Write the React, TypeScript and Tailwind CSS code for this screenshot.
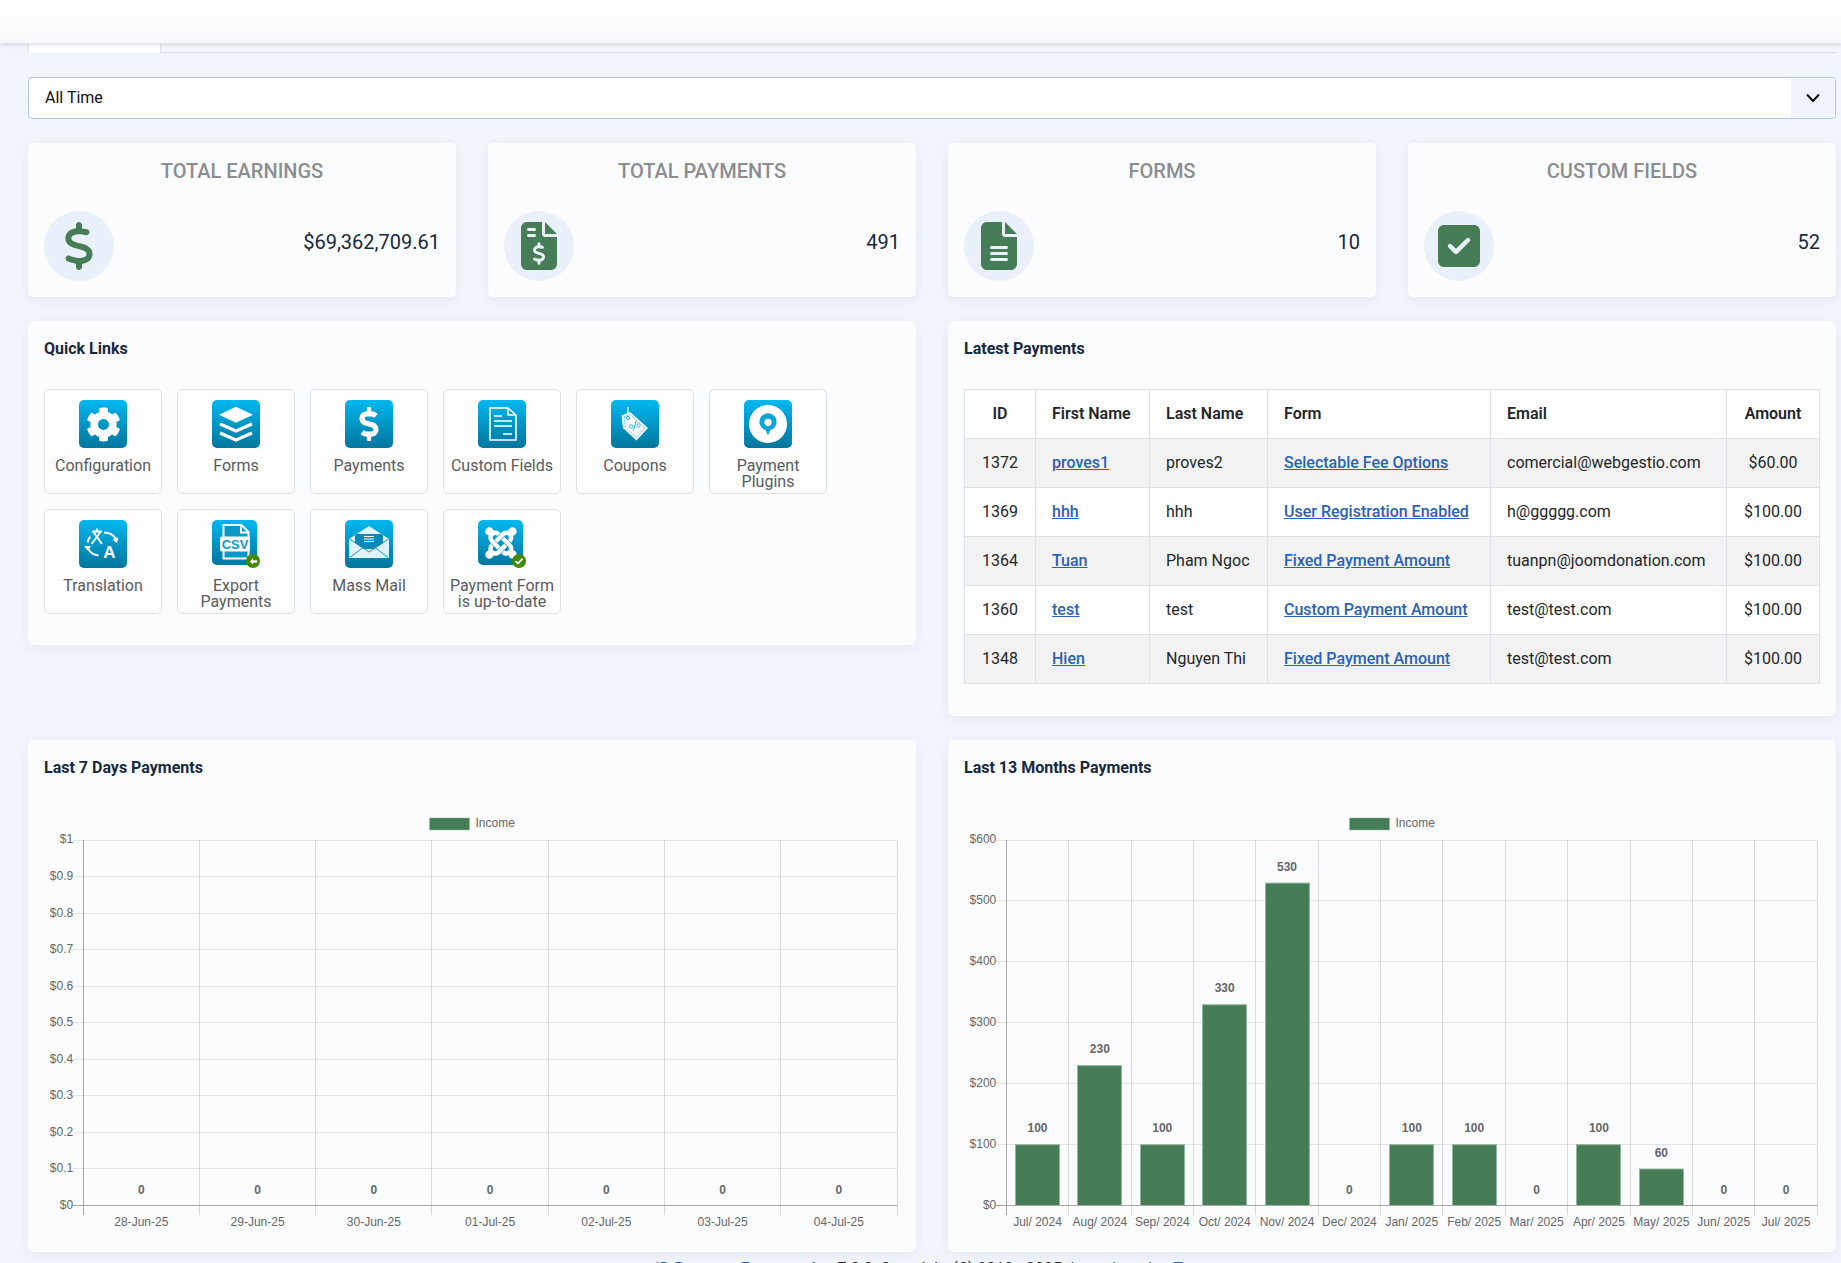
import { FaCog, FaDollarSign, FaJoomla } from 'react-icons/fa';
import { FaDollarSign as FaDollar6, FaFileInvoiceDollar, FaFileLines, FaSquareCheck } from 'react-icons/fa6';

interface ChartProps {
  viewBox: string;
  width: number;
  height: number;
  axisX: number;
  rightX: number;
  legendX: number;
  labels: string[];
  values: number[];
  maxValue: number;
  yTicks: string[];
  showBars?: boolean;
}

const stats = [
  { title: 'TOTAL EARNINGS', value: '$69,362,709.61', icon: <FaDollar6 size={48} /> },
  { title: 'TOTAL PAYMENTS', value: '491', icon: <FaFileInvoiceDollar size={48} /> },
  { title: 'FORMS', value: '10', icon: <FaFileLines size={48} /> },
  { title: 'CUSTOM FIELDS', value: '52', icon: <FaSquareCheck size={48} /> },
];

const payments = [
  { id: 1372, first: 'proves1', last: 'proves2', form: 'Selectable Fee Options', email: 'comercial@webgestio.com', amount: '$60.00' },
  { id: 1369, first: 'hhh', last: 'hhh', form: 'User Registration Enabled', email: 'h@ggggg.com', amount: '$100.00' },
  { id: 1364, first: 'Tuan', last: 'Pham Ngoc', form: 'Fixed Payment Amount', email: 'tuanpn@joomdonation.com', amount: '$100.00' },
  { id: 1360, first: 'test', last: 'test', form: 'Custom Payment Amount', email: 'test@test.com', amount: '$100.00' },
  { id: 1348, first: 'Hien', last: 'Nguyen Thi', form: 'Fixed Payment Amount', email: 'test@test.com', amount: '$100.00' },
];

const days = ['28-Jun-25', '29-Jun-25', '30-Jun-25', '01-Jul-25', '02-Jul-25', '03-Jul-25', '04-Jul-25'];
const months = ['Jul/ 2024', 'Aug/ 2024', 'Sep/ 2024', 'Oct/ 2024', 'Nov/ 2024', 'Dec/ 2024', 'Jan/ 2025', 'Feb/ 2025', 'Mar/ 2025', 'Apr/ 2025', 'May/ 2025', 'Jun/ 2025', 'Jul/ 2025'];

function Tile({ small, children }: { small?: boolean; children: React.ReactNode }) {
  return (
    <div className={`flex items-center justify-center rounded-[5px] bg-linear-to-b from-[#00b8f0] to-[#00769e] text-white ${small ? 'h-[45px] w-[45px]' : 'h-[48px] w-[48px]'}`}>
      {children}
    </div>
  );
}

function Badge({ children }: { children: React.ReactNode }) {
  return (
    <span className="absolute left-[34px] top-[34px] flex h-[14px] w-[14px] items-center justify-center rounded-full bg-[#3f8a05]">
      {children}
    </span>
  );
}

function LayersIcon() {
  return (
    <svg width="48" height="48" viewBox="0 0 48 48" fill="none" stroke="white" strokeWidth="3.2">
      <polygon points="24,6.7 41,14.7 24,22.7 7,14.7" fill="white" stroke="none" />
      <polyline points="8,24 24,31 40,24" />
      <polyline points="8,33 24,40 40,33" />
    </svg>
  );
}

function DocIcon() {
  return (
    <svg width="48" height="48" viewBox="0 0 48 48" fill="none" stroke="white" strokeWidth="1.6">
      <path d="M12 8h18l8 7v25H12z" />
      <path d="M30 8v7h8" />
      <path d="M16 16h8M16 21h18M16 26h18M25 34h9" />
    </svg>
  );
}

function CouponIcon() {
  return (
    <svg width="48" height="48" viewBox="0 0 48 48" fill="none">
      <path d="M17 7l-.6 9" stroke="white" strokeWidth="1.5" />
      <path d="M10.5 15.5L19 12l18 16-11.5 12.5L12 28z" fill="white" />
      <path d="M13 17l6-2.5 15 13.5-8.5 9.5L14.5 27z" stroke="#25b4e4" strokeWidth="0.8" strokeDasharray="2 1" />
      <circle cx="17" cy="18" r="1.6" stroke="#25b4e4" />
      <circle cx="20" cy="26.5" r="1.7" stroke="#25b4e4" />
      <circle cx="27.5" cy="25.5" r="1.7" stroke="#25b4e4" />
      <path d="M25 21l-2.5 10" stroke="#25b4e4" />
    </svg>
  );
}

function PluginIcon() {
  return (
    <svg width="48" height="48" viewBox="0 0 48 48">
      <circle cx="24" cy="24" r="19" fill="white" />
      <path d="M24 35.5l-2.4-5.4a8.6 8.6 0 1 1 4.8 0z" fill="#11a5d6" />
      <circle cx="24" cy="22.3" r="3.6" fill="white" />
    </svg>
  );
}

function TranslateIcon() {
  return (
    <svg width="48" height="48" viewBox="0 0 48 48" fill="none" stroke="white">
      <path d="M13 11.500h10M18 8.500v3M14.500 12l8.500 12M21.500 12l-9 12" strokeWidth="2" />
      <path d="M25 12.500a14 14 0 0 1 12.500 7.500" strokeWidth="2" />
      <path d="M33.500 19.500l4.500 3.500 1.500-5.500z" fill="white" stroke="none" />
      <path d="M11.500 16.500a13 13 0 0 0-3 6" strokeWidth="2" />
      <path d="M8.500 27a13 13 0 0 0 11 8.500" strokeWidth="2" />
      <path d="M5 26l3.500 4.500 3.500-4.500z" fill="white" stroke="none" />
      <text x="30.500" y="37.500" textAnchor="middle" fill="white" stroke="none" className="font-['Liberation_Sans'] text-[17px] font-bold">A</text>
    </svg>
  );
}

function CsvIcon() {
  return (
    <svg width="45" height="45" viewBox="0 0 45 45" fill="none">
      <path d="M11.500 5h18l7 7v26.500h-25z" stroke="white" strokeWidth="2" fill="#0c97c9" />
      <path d="M29 5v7.500h7.500" stroke="white" strokeWidth="2" />
      <rect x="8" y="16.500" width="30" height="15" rx="2" fill="white" />
      <text x="23" y="28.500" textAnchor="middle" fill="#0a9acb" className="font-['Liberation_Sans'] text-[13px] font-bold">CSV</text>
    </svg>
  );
}

function MailIcon() {
  return (
    <svg width="48" height="48" viewBox="0 0 48 48">
      <polygon points="24,6 44,19 44,38 4,38 4,19" fill="#dff3fa" />
      <rect x="10" y="14" width="28" height="15" rx="2" fill="#0b89b6" />
      <path d="M19 16.500h10M19 19h10M19 21.500h10" stroke="white" strokeWidth="1" />
      <polygon points="4,19 24,32 44,19 44,38 4,38" fill="#dff3fa" />
      <path d="M4.500 19L24 32l19.500-13M5 37.500l13-10M43 37.500l-13-10" fill="none" stroke="#0b89b6" strokeWidth="0.9" />
    </svg>
  );
}

const quickLinks: { label: string; icon: React.ReactNode }[] = [
  { label: 'Configuration', icon: <Tile><FaCog size={35} /></Tile> },
  { label: 'Forms', icon: <Tile><LayersIcon /></Tile> },
  { label: 'Payments', icon: <Tile><FaDollarSign size={34} /></Tile> },
  { label: 'Custom Fields', icon: <Tile><DocIcon /></Tile> },
  { label: 'Coupons', icon: <Tile><CouponIcon /></Tile> },
  { label: 'Payment Plugins', icon: <Tile><PluginIcon /></Tile> },
  { label: 'Translation', icon: <Tile><TranslateIcon /></Tile> },
  {
    label: 'Export Payments',
    icon: (
      <>
        <Tile small><CsvIcon /></Tile>
        <Badge>
          <svg width="9" height="9" viewBox="0 0 10 10"><path d="M1 5l3.500-3.500V3.500H9v3H4.500v2z" fill="white" /></svg>
        </Badge>
      </>
    ),
  },
  { label: 'Mass Mail', icon: <Tile><MailIcon /></Tile> },
  {
    label: 'Payment Form is up-to-date',
    icon: (
      <>
        <Tile small><FaJoomla size={36} /></Tile>
        <Badge>
          <svg width="10" height="10" viewBox="0 0 10 10"><path d="M1.500 5.200l2.400 2.300 4.600-4.800" fill="none" stroke="white" strokeWidth="1.800" /></svg>
        </Badge>
      </>
    ),
  },
];

function Card({ title, className = '', children }: { title: string; className?: string; children: React.ReactNode }) {
  return (
    <div className={`rounded-[5px] bg-[#fbfcfe] px-4 pt-4 shadow-[0_3px_10px_rgba(70,100,160,0.07)] ${className}`}>
      <h3 className="mb-[28px] h-[24px] text-[16px] font-bold leading-[24px] text-[#17293f]">{title}</h3>
      {children}
    </div>
  );
}

function Chart({ viewBox, width, height, axisX, rightX, legendX, labels, values, maxValue, yTicks, showBars }: ChartProps) {
  const top = 840;
  const bottom = 1205;
  const colW = (rightX - axisX) / labels.length;
  const sans = "font-['Liberation_Sans'] text-[12px]";

  return (
    <svg width={width} height={height} viewBox={viewBox} className="block">
      <rect x={legendX} y={818} width={40} height={12} fill="#477d56" stroke="#8fb59b" strokeWidth={0.5} />
      <text x={legendX + 46} y={827} fill="#666" className={sans}>Income</text>

      {yTicks.map((tick, i) => {
        const y = Math.floor(top + ((bottom - top) / (yTicks.length - 1)) * i) + 0.5;
        return (
          <g key={tick}>
            <line x1={axisX - 10} x2={rightX} y1={y} y2={y} stroke={i === yTicks.length - 1 ? '#a8a8a8' : '#e3e4e6'} />
            <text x={axisX - 10} y={y + (i === 0 ? 2 : 3)} textAnchor="end" fill="#666" className={sans}>{tick}</text>
          </g>
        );
      })}

      {labels.map((_, i) => {
        const x = Math.floor(axisX + colW * i) + 0.5;
        return <line key={i} x1={x} x2={x} y1={top} y2={1215} stroke={i === 0 ? '#a8a8a8' : '#d9d9dc'} />;
      })}
      <line x1={Math.floor(rightX) + 0.5} x2={Math.floor(rightX) + 0.5} y1={top} y2={1215} stroke="#d9d9dc" />

      {showBars && values.map((v, i) => {
        const h = (v / maxValue) * (bottom - top);
        const x = Math.round(axisX + colW * i + (colW - 45) / 2);
        return v > 0 ? (
          <rect key={i} x={x + 0.5} y={bottom - h + 0.5} width={44} height={h} fill="#477d56" stroke="#93b8a0" />
        ) : null;
      })}
      <line x1={axisX} x2={rightX} y1={1205.5} y2={1205.5} stroke="#a8a8a8" />

      {values.map((v, i) => {
        const h = (v / maxValue) * (bottom - top);
        const cx = axisX + colW * (i + 0.5);
        return (
          <g key={i}>
            <text x={cx} y={bottom - h - (v === 0 ? 11 : 12)} textAnchor="middle" fill="#666" className={`${sans} font-bold`}>{v}</text>
            <text x={cx} y={1226} textAnchor="middle" fill="#666" className={sans}>{labels[i]}</text>
          </g>
        );
      })}
    </svg>
  );
}

export default function App() {
  return (
    <div className="h-[1263px] overflow-hidden bg-[#f0f4fb] font-['Roboto',sans-serif] text-[16px] text-[#22262a]">
      <header className="relative z-10 h-[43px] bg-linear-to-b from-white to-[#f6f8fb] shadow-[0_1px_5px_rgba(60,80,110,0.22)]" />

      <main className="pl-[28px] pr-[5px]">
        <div className="h-[10px] border-b border-[#d9dfe7] bg-[#f2f5f9]">
          <div className="h-[10px] w-[133px] border-x border-[#e3e7ec] bg-white" />
        </div>

        <div className="mt-[24px] flex h-[42px] items-stretch overflow-hidden rounded-[4px] border border-[#b3c5e0] bg-white">
          <div className="flex flex-1 items-center pl-[16px] text-[#111]">All Time</div>
          <div className="flex w-[44px] items-center justify-center bg-[#eff3fb]">
            <svg width="16" height="10" viewBox="0 0 16 10" fill="none" stroke="#111" strokeWidth="2">
              <path d="M2 1.500l6 6.500 6-6.500" />
            </svg>
          </div>
        </div>

        <div className="mt-[24px] grid grid-cols-4 gap-x-[32px]">
          {stats.map((s) => (
            <div key={s.title} className="h-[154px] rounded-[5px] bg-[#fbfcfe] px-4 pt-[17px] shadow-[0_3px_10px_rgba(70,100,160,0.07)]">
              <div className="text-center text-[20px] font-medium leading-[22px] text-[#8b8d90]">{s.title}</div>
              <div className="mt-[29px] flex items-start justify-between">
                <div className="flex h-[70px] w-[70px] items-center justify-center rounded-full bg-[#e9f0f9] text-[#477d56]">
                  {s.icon}
                </div>
                <div className="mt-[16px] text-[20px] leading-[30px] text-[#17293f]">{s.value}</div>
              </div>
            </div>
          ))}
        </div>

        <div className="mt-[24px] grid grid-cols-2 items-start gap-x-[32px]">
          <Card title="Quick Links" className="pb-[31px]">
            <div className="flex flex-wrap gap-x-[15px] gap-y-[15px]">
              {quickLinks.map((q) => (
                <div key={q.label} className="flex h-[105px] w-[118px] flex-col items-center rounded-[5px] border border-[#dfe1e5] bg-[#fdfdfe] pt-[10px]">
                  <div className="relative h-[48px] w-[48px]">{q.icon}</div>
                  <div className="mt-[10px] px-1 text-center text-[16px] leading-[16px] text-[#5a5c60]">{q.label}</div>
                </div>
              ))}
            </div>
          </Card>

          <Card title="Latest Payments" className="pb-[32px]">
            <table className="w-[855px] table-fixed border-collapse bg-white text-[16px]">
              <colgroup>
                <col className="w-[71px]" />
                <col className="w-[114px]" />
                <col className="w-[118px]" />
                <col className="w-[223px]" />
                <col className="w-[236px]" />
                <col className="w-[93px]" />
              </colgroup>
              <thead>
                <tr className="h-[49px] font-semibold">
                  <th className="border border-[#dee2e6] text-center font-semibold">ID</th>
                  <th className="border border-[#dee2e6] pl-4 text-left font-semibold">First Name</th>
                  <th className="border border-[#dee2e6] pl-4 text-left font-semibold">Last Name</th>
                  <th className="border border-[#dee2e6] pl-4 text-left font-semibold">Form</th>
                  <th className="border border-[#dee2e6] pl-4 text-left font-semibold">Email</th>
                  <th className="border border-[#dee2e6] text-center font-semibold">Amount</th>
                </tr>
              </thead>
              <tbody>
                {payments.map((p, i) => (
                  <tr key={p.id} className={`h-[49px] ${i % 2 === 0 ? 'bg-[#f2f2f2]' : 'bg-white'}`}>
                    <td className="border border-[#dee2e6] text-center">{p.id}</td>
                    <td className="border border-[#dee2e6] pl-4">
                      <a href="#" className="font-medium text-[#2a62b4] underline">{p.first}</a>
                    </td>
                    <td className="border border-[#dee2e6] pl-4">{p.last}</td>
                    <td className="border border-[#dee2e6] pl-4">
                      <a href="#" className="font-medium text-[#2a62b4] underline">{p.form}</a>
                    </td>
                    <td className="border border-[#dee2e6] pl-4">{p.email}</td>
                    <td className="border border-[#dee2e6] text-center">{p.amount}</td>
                  </tr>
                ))}
              </tbody>
            </table>
          </Card>
        </div>

        <div className="mt-[24px] grid grid-cols-2 gap-x-[32px]">
          <Card title="Last 7 Days Payments" className="h-[512px]">
            <Chart
              viewBox="44 808 855 428"
              width={855}
              height={428}
              axisX={83.2}
              rightX={897}
              legendX={429.5}
              labels={days}
              values={[0, 0, 0, 0, 0, 0, 0]}
              maxValue={1}
              yTicks={['$1', '$0.9', '$0.8', '$0.7', '$0.6', '$0.5', '$0.4', '$0.3', '$0.2', '$0.1', '$0']}
            />
          </Card>
          <Card title="Last 13 Months Payments" className="h-[512px]">
            <Chart
              viewBox="964 808 855 428"
              width={855}
              height={428}
              axisX={1006.3}
              rightX={1817.3}
              legendX={1349.5}
              labels={months}
              values={[100, 230, 100, 330, 530, 0, 100, 100, 0, 100, 60, 0, 0]}
              maxValue={600}
              yTicks={['$600', '$500', '$400', '$300', '$200', '$100', '$0']}
              showBars
            />
          </Card>
        </div>

        <div className="mt-[5px] text-center leading-[24px]">
          <a href="#" className="text-[#2a62b4]">JD Payment Form</a> version 7.0.0, Copyright (C) 2010 - 2025 <a href="#" className="text-[#2a62b4]">Joomdonation Team</a>
        </div>
      </main>
    </div>
  );
}
